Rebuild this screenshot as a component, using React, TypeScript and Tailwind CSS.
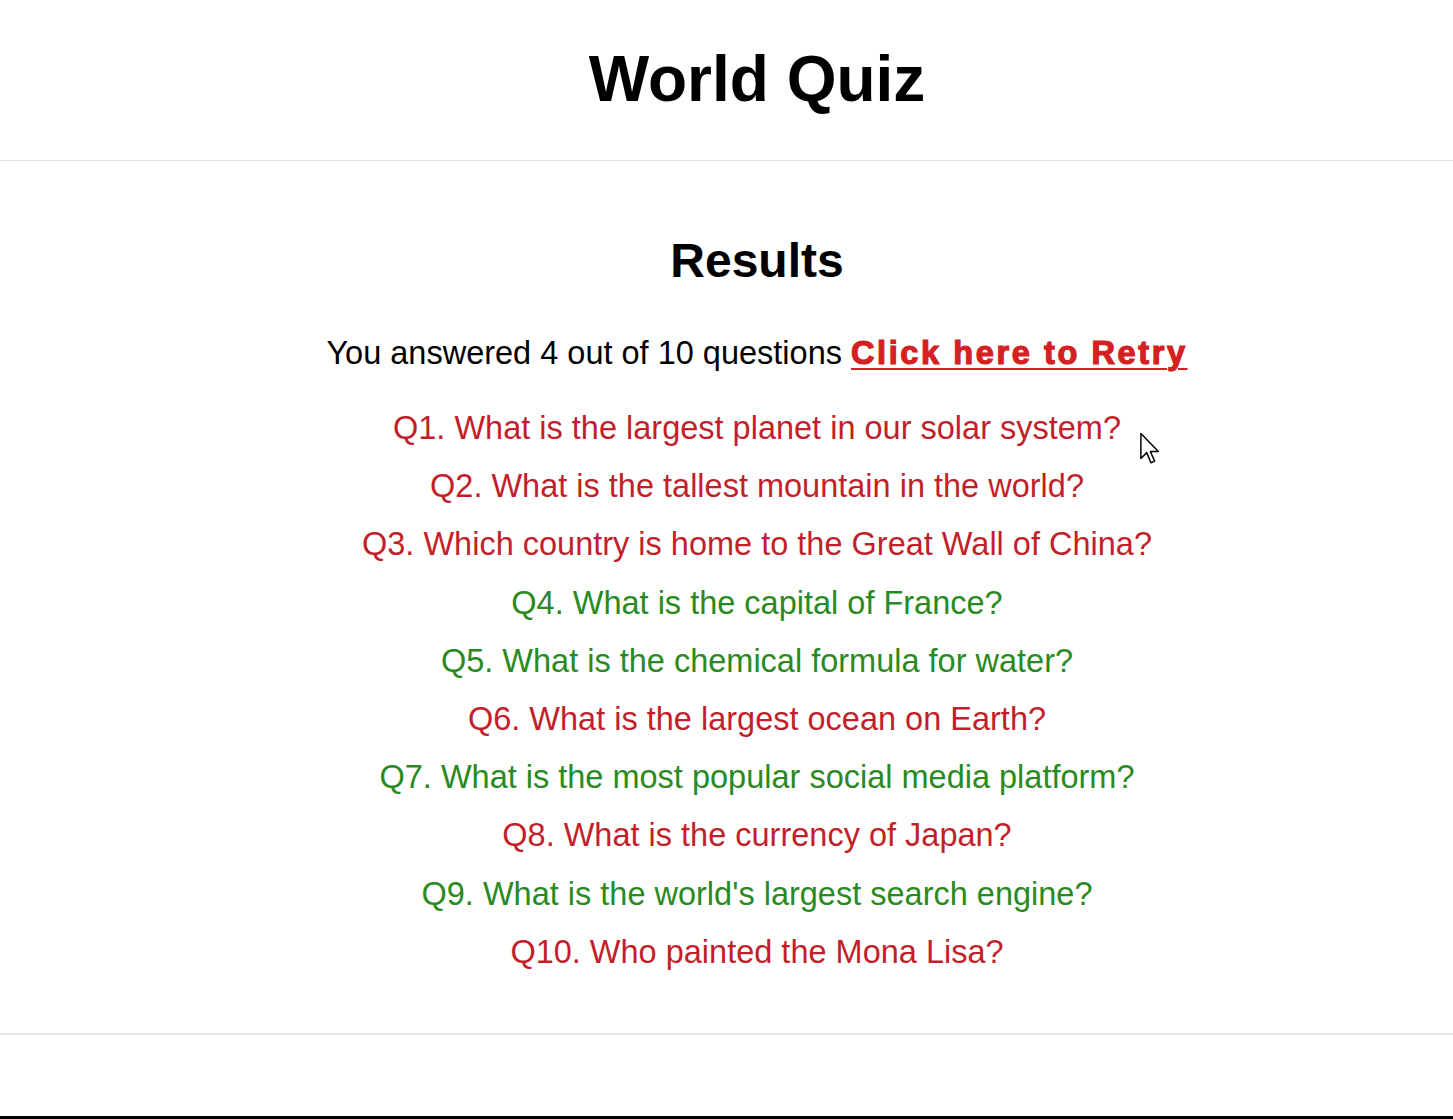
const questions = [
  { text: "Q1. What is the largest planet in our solar system?", correct: false },
  { text: "Q2. What is the tallest mountain in the world?", correct: false },
  { text: "Q3. Which country is home to the Great Wall of China?", correct: false },
  { text: "Q4. What is the capital of France?", correct: true },
  { text: "Q5. What is the chemical formula for water?", correct: true },
  { text: "Q6. What is the largest ocean on Earth?", correct: false },
  { text: "Q7. What is the most popular social media platform?", correct: true },
  { text: "Q8. What is the currency of Japan?", correct: false },
  { text: "Q9. What is the world's largest search engine?", correct: true },
  { text: "Q10. Who painted the Mona Lisa?", correct: false },
];

export default function App() {
  return (
    <div className="relative flex h-[1119px] flex-col bg-white font-['Liberation_Sans',Arial,sans-serif] text-black">
      <header className="flex h-[161px] items-start border-b border-[#e3e3e3] pl-[61px]">
        <h1 className="mt-[42px] w-full text-center text-[64px] font-bold leading-[74px]">World Quiz</h1>
      </header>

      <main className="flex h-[874px] flex-col items-center border-b-2 border-[#e6e6e6] pl-[61px]">
        <h2 className="mt-[72px] text-[48px] font-bold leading-[56px]">Results</h2>
        <p className="mt-[44px] text-[32.5px] leading-[40px]">
          You answered 4 out of 10 questions{" "}
          <a
            href="#"
            className="font-bold tracking-[2.6px] text-[#d42020] underline decoration-2 underline-offset-4 [-webkit-text-stroke:1.2px_#d42020]"
          >
            Click here to Retry
          </a>
        </p>
        <ul className="mt-[26px] flex flex-col items-center">
          {questions.map((q) => (
            <li
              key={q.text}
              className={
                "text-[32.5px] leading-[58.2px] " +
                (q.correct ? "text-[#2a8a22]" : "text-[#c21f2b]")
              }
            >
              {q.text}
            </li>
          ))}
        </ul>
      </main>

      <div className="flex-1" />
      <div className="h-[3px] bg-black" />

      <svg
        className="absolute left-[1139px] top-[432px]"
        width="26"
        height="36"
        viewBox="0 0 24 34"
      >
        <path
          d="M1.5 1.5 L1.5 25 L7 19.5 L11 29 L14.5 27.5 L10.5 18.5 L18 18.5 Z"
          fill="white"
          stroke="black"
          strokeWidth="1.4"
          strokeLinejoin="round"
        />
      </svg>
    </div>
  );
}
